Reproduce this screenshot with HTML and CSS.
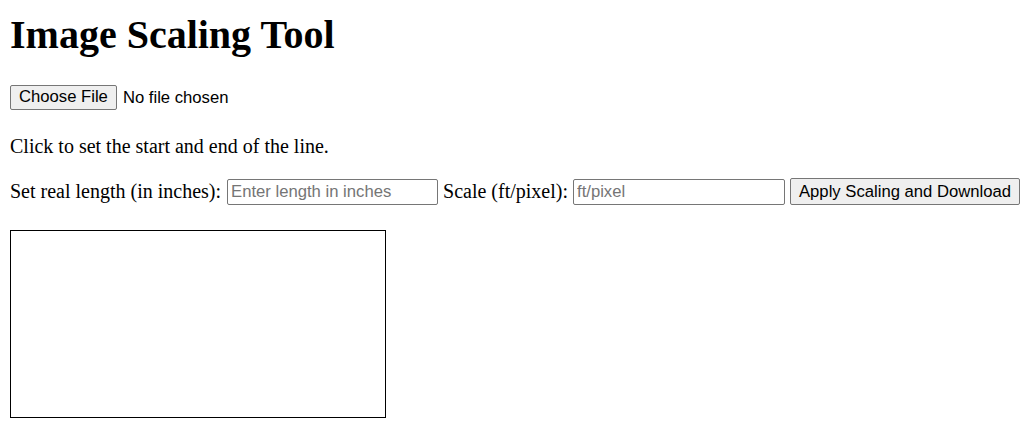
FILE: index.html
```html
<!DOCTYPE html>
<html>
<head>
<meta charset="utf-8">
<title>Image Scaling Tool</title>
<link rel="stylesheet" href="styles.css">
</head>
<body>
<h1 class="title">Image Scaling Tool</h1>
<div class="file-row">
  <input type="file" class="file-input" accept="image/*">
</div>
<p class="hint">Click to set the start and end of the line.</p>
<div class="controls">
  <label class="label" for="len">Set real length (in inches):</label>
  <input id="len" class="field field-first" type="number" placeholder="Enter length in inches">
  <label class="label" for="scale">Scale (ft/pixel):</label>
  <input id="scale" class="field" type="text" placeholder="ft/pixel">
  <button class="btn" type="button">Apply Scaling and Download</button>
</div>
<canvas class="board" width="300" height="150"></canvas>
</body>
</html>
```
FILE: styles.css
```css
html, body {
  background: #fff;
}
body {
  margin: 10px 0 10px 10px;
  font-family: "Liberation Serif", "Times New Roman", serif;
  font-size: 20px;
  color: #000;
}
.title {
  font-size: 40px;
  font-weight: bold;
  line-height: 46px;
  margin: 2px 0 26px;
}
.file-row {
  height: 30px;
}
.file-input {
  font-family: "Liberation Sans", Arial, sans-serif;
  font-size: 16.67px;
  color: #000;
  margin: 0;
}
.file-input::file-selector-button {
  font-family: "Liberation Sans", Arial, sans-serif;
  font-size: 16.67px;
  height: 25px;
  padding: 0 8px;
  margin: 0 6px 0 0;
  background: #efefef;
  border: 1px solid #767676;
  border-radius: 2px;
  color: #000;
}
.hint {
  margin: 21px 0 20px;
  line-height: 23px;
}
.controls {
  display: flex;
  align-items: center;
  gap: 5px;
  height: 27px;
  white-space: nowrap;
}
.controls > * {
  flex-shrink: 0;
}
.label {
  line-height: 23px;
}
.field {
  box-sizing: border-box;
  width: 212px;
  height: 26px;
  margin: 0;
  padding: 2px 3px;
  border: 1px solid #767676;
  border-radius: 2px;
  font-family: "Liberation Sans", Arial, sans-serif;
  font-size: 16.67px;
  color: #000;
  background: #fff;
}
.field-first {
  width: 211px;
  margin-left: 1px;
}
.field::placeholder {
  color: #757575;
}
.field::-webkit-outer-spin-button,
.field::-webkit-inner-spin-button {
  -webkit-appearance: none;
  margin: 0;
}
.btn {
  box-sizing: border-box;
  height: 27px;
  padding: 0 8px;
  margin: 0;
  background: #efefef;
  border: 1px solid #767676;
  border-radius: 2px;
  font-family: "Liberation Sans", Arial, sans-serif;
  font-size: 16.67px;
  color: #000;
}
.board {
  display: block;
  width: 374px;
  height: 186px;
  margin-top: 25px;
  border: 1px solid #000;
}
```
